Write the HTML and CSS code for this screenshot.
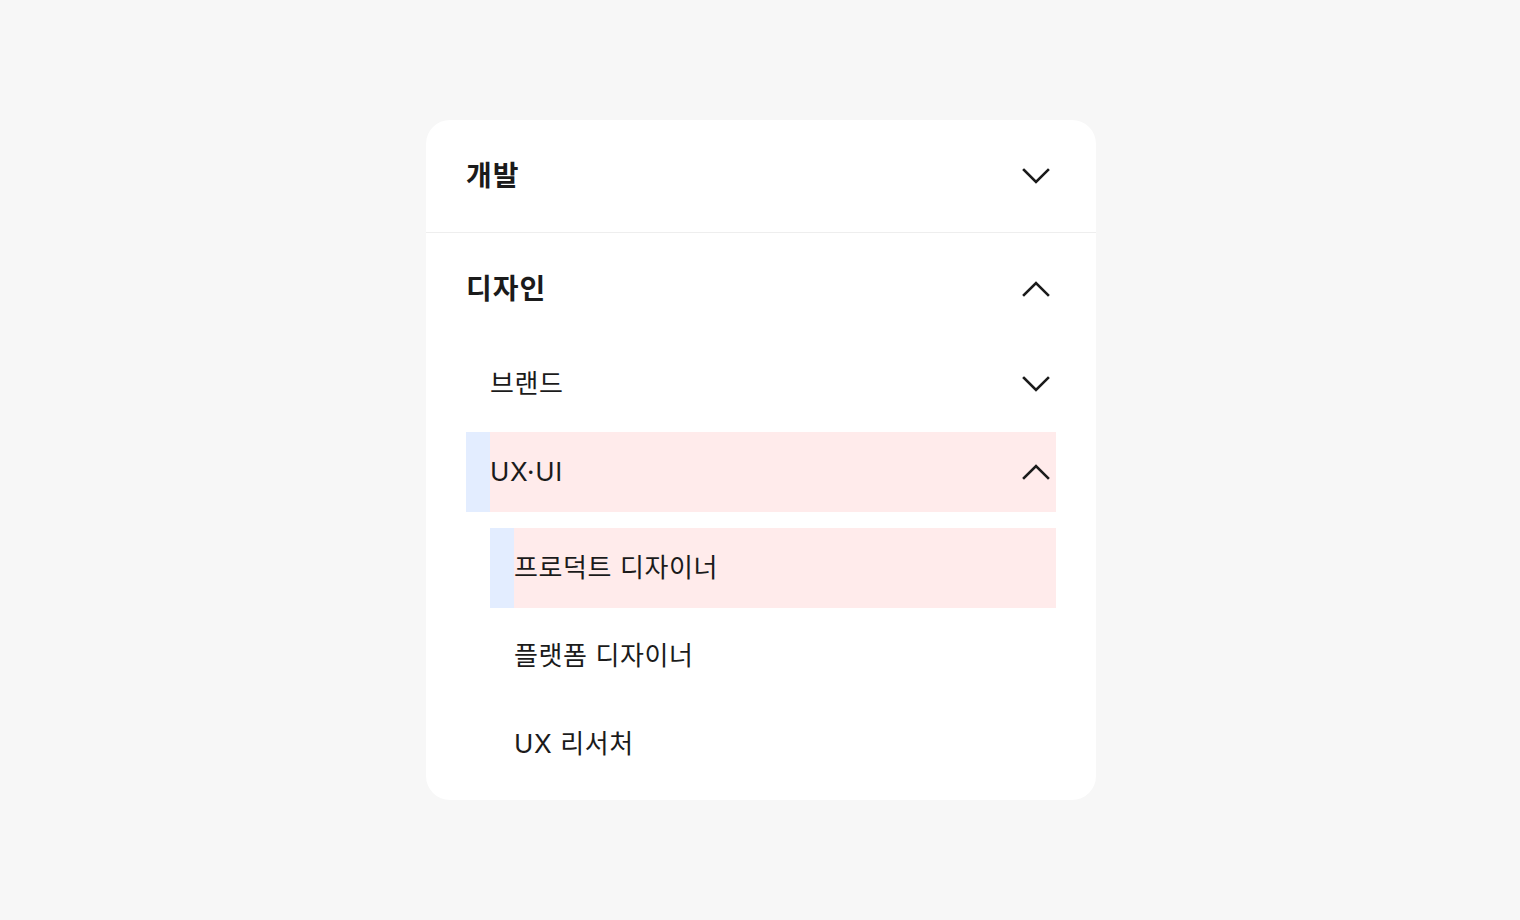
FILE: index.html
```html
<!DOCTYPE html>
<html lang="ko">
<head>
<meta charset="utf-8">
<title>직무 카테고리</title>
<link rel="stylesheet" href="styles.css">
</head>
<body>
<div class="card">
  <section class="group">
    <div class="head">
      <span class="head-label">개발</span>
      <svg class="chev" viewBox="0 0 40 40" width="40" height="40"><path d="M8 14 L20 26 L32 14"/></svg>
    </div>
  </section>
  <section class="group group-open">
    <div class="head head-open">
      <span class="head-label">디자인</span>
      <svg class="chev" viewBox="0 0 40 40" width="40" height="40"><path d="M8 26 L20 14 L32 26"/></svg>
    </div>
    <ul class="sub">
      <li class="row">
        <span class="row-label">브랜드</span>
        <svg class="chev" viewBox="0 0 40 40" width="40" height="40"><path d="M8 14 L20 26 L32 14"/></svg>
      </li>
      <li class="row row-active">
        <div class="row-inner">
          <span class="row-label">UX·UI</span>
          <svg class="chev" viewBox="0 0 40 40" width="40" height="40"><path d="M8 26 L20 14 L32 26"/></svg>
        </div>
      </li>
      <li class="nested">
        <ul class="leaf-list">
          <li class="leaf leaf-active"><span class="leaf-inner">프로덕트 디자이너</span></li>
          <li class="leaf"><span class="leaf-inner">플랫폼 디자이너</span></li>
          <li class="leaf"><span class="leaf-inner">UX 리서처</span></li>
        </ul>
      </li>
    </ul>
  </section>
</div>
</body>
</html>
```

FILE: styles.css
```css
* { box-sizing: border-box; }
html, body { margin: 0; padding: 0; }
body {
  background: #f7f7f7;
  font-family: Inter, "Noto Sans CJK KR", sans-serif;
  color: #1b1b1b;
  height: 920px;
  padding-left: 2px;
  display: flex;
  align-items: center;
  justify-content: center;
}
.card {
  width: 670px;
  background: #ffffff;
  border-radius: 24px;
  overflow: hidden;
  padding-bottom: 16px;
}
.group + .group { border-top: 1px solid #eeeeee; }
.head {
  height: 112px;
  padding: 0 40px;
  display: flex;
  align-items: center;
  justify-content: space-between;
}
.head-open { height: 111px; }
.head-label {
  font-size: 28px;
  font-weight: 700;
  letter-spacing: 1px;
  line-height: 32px;
}
.chev {
  display: block;
  flex: none;
  fill: none;
  stroke: #1b1b1b;
  stroke-width: 2.6;
  stroke-linecap: square;
  stroke-linejoin: miter;
}
.sub {
  list-style: none;
  margin: 0;
  padding: 0 40px;
  display: flex;
  flex-direction: column;
  gap: 8px;
}
.row {
  height: 80px;
  padding-left: 24px;
  display: flex;
  align-items: center;
  justify-content: space-between;
}
.row-label, .leaf-inner {
  font-size: 26px;
  font-weight: 400;
  letter-spacing: 0.6px;
  line-height: 32px;
}
.row-active {
  background: #e3edff;
  align-items: stretch;
}
.row-inner {
  flex: 1;
  display: flex;
  align-items: center;
  justify-content: space-between;
  background: #ffebeb;
}
.nested { padding-top: 8px; }
.leaf-list {
  list-style: none;
  margin: 0;
  padding: 0 0 0 24px;
  display: flex;
  flex-direction: column;
  gap: 8px;
}
.leaf {
  height: 80px;
  padding-left: 24px;
  display: flex;
}
.leaf-inner {
  flex: 1;
  display: flex;
  align-items: center;
}
.leaf-active { background: #e3edff; }
.leaf-active .leaf-inner { background: #ffebeb; }
```
